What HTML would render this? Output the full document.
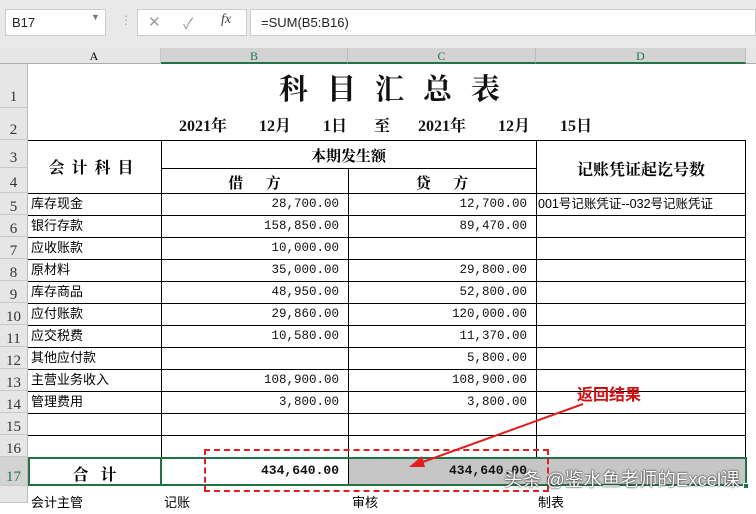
<!DOCTYPE html>
<html><head><meta charset="utf-8"><style>
*{margin:0;padding:0;box-sizing:border-box}
body{width:756px;height:503px;overflow:hidden;background:#fff;position:relative;font-family:"Liberation Sans","Noto Sans CJK SC",sans-serif}
.a{position:absolute}
.ser{font-family:"Liberation Serif","Noto Serif CJK SC",serif}
.rh{position:absolute;left:0;width:28px;background:#e6e6e6;border-bottom:1px solid #c8c8c8;color:#333;font-size:15px;text-align:center;font-family:"Liberation Serif",serif;border-right:1px solid #bbb}
.hl{position:absolute;background:#000}
.cell{position:absolute;font-size:13px;line-height:22px;white-space:nowrap}
.num{text-align:right;font-family:"Liberation Mono",monospace;font-size:12.5px;color:#111}
.d{position:absolute;top:113px;font-size:16px;font-weight:bold;color:#111;font-family:"Liberation Serif","Noto Serif CJK SC",serif;white-space:nowrap}
</style></head><body>
<div class="a" style="left:0;top:0;width:756px;height:48px;background:#e9e9e9"></div>
<div class="a" style="left:5px;top:9px;width:101px;height:27px;background:#fff;border:1px solid #ccc;font-size:13px;line-height:25px;padding-left:6px;color:#222">B17</div>
<div class="a" style="left:91px;top:12px;font-size:9px;color:#777">▼</div>
<div class="a" style="left:120px;top:13px;font-size:12px;color:#aaa">⋮</div>
<div class="a" style="left:137px;top:9px;width:110px;height:27px;background:#fff;border:1px solid #ccc"></div>
<div class="a" style="left:148px;top:13px;font-size:15px;color:#999">✕</div>
<div class="a" style="left:183px;top:13px;font-size:15px;color:#999">✓</div>
<div class="a ser" style="left:221px;top:12px;font-size:14px;font-style:italic;color:#444">fx</div>
<div class="a" style="left:250px;top:9px;width:506px;height:27px;background:#fff;border:1px solid #ccc;font-size:13px;line-height:25px;padding-left:10px;color:#222">=SUM(B5:B16)</div>
<div class="a ser" style="left:0;top:48px;width:756px;height:16px;background:#e6e6e6;border-bottom:1px solid #aaa"></div>
<div class="a ser" style="left:28px;top:48px;width:133px;height:16px;text-align:center;font-size:12px;line-height:16px;border-right:1px solid #c8c8c8">A</div>
<div class="a ser" style="left:161px;top:48px;width:187px;height:16px;background:#d3d3d3;text-align:center;font-size:12px;line-height:16px;color:#217346;border-right:1px solid #bbb;border-bottom:2px solid #217346">B</div>
<div class="a ser" style="left:348px;top:48px;width:188px;height:16px;background:#d3d3d3;text-align:center;font-size:12px;line-height:16px;color:#217346;border-right:1px solid #bbb;border-bottom:2px solid #217346">C</div>
<div class="a ser" style="left:536px;top:48px;width:210px;height:16px;background:#d3d3d3;text-align:center;font-size:12px;line-height:16px;color:#217346;border-right:1px solid #bbb;border-bottom:2px solid #217346">D</div>
<div class="rh" style="top:64px;height:44px;line-height:66px">1</div>
<div class="rh" style="top:108px;height:32px;line-height:44px">2</div>
<div class="rh" style="top:140px;height:28px;line-height:36px">3</div>
<div class="rh" style="top:168px;height:25px;line-height:30px">4</div>
<div class="rh" style="top:193px;height:22px;line-height:28px">5</div>
<div class="rh" style="top:215px;height:22px;line-height:28px">6</div>
<div class="rh" style="top:237px;height:22px;line-height:28px">7</div>
<div class="rh" style="top:259px;height:22px;line-height:28px">8</div>
<div class="rh" style="top:281px;height:22px;line-height:28px">9</div>
<div class="rh" style="top:303px;height:22px;line-height:28px">10</div>
<div class="rh" style="top:325px;height:22px;line-height:28px">11</div>
<div class="rh" style="top:347px;height:22px;line-height:28px">12</div>
<div class="rh" style="top:369px;height:22px;line-height:28px">13</div>
<div class="rh" style="top:391px;height:22px;line-height:28px">14</div>
<div class="rh" style="top:413px;height:22px;line-height:28px">15</div>
<div class="rh" style="top:435px;height:22px;line-height:28px">16</div>
<div class="rh" style="top:457px;height:29px;line-height:40px;background:#d3d3d3;color:#217346">17</div>
<div class="rh" style="top:486px;height:17px"></div>
<div class="a ser" style="left:279px;top:67px;font-size:29px;letter-spacing:19px;font-weight:bold;color:#111;white-space:nowrap">科目汇总表</div>
<div class="d" style="left:179px">2021年</div>
<div class="d" style="left:259px">12月</div>
<div class="d" style="left:323px">1日</div>
<div class="d" style="left:374px">至</div>
<div class="d" style="left:418px">2021年</div>
<div class="d" style="left:498px">12月</div>
<div class="d" style="left:560px">15日</div>
<div class="hl" style="left:28px;top:140px;width:718px;height:1px"></div>
<div class="hl" style="left:161px;top:168px;width:375px;height:1px"></div>
<div class="hl" style="left:28px;top:193px;width:718px;height:1px"></div>
<div class="hl" style="left:28px;top:215px;width:718px;height:1px"></div>
<div class="hl" style="left:28px;top:237px;width:718px;height:1px"></div>
<div class="hl" style="left:28px;top:259px;width:718px;height:1px"></div>
<div class="hl" style="left:28px;top:281px;width:718px;height:1px"></div>
<div class="hl" style="left:28px;top:303px;width:718px;height:1px"></div>
<div class="hl" style="left:28px;top:325px;width:718px;height:1px"></div>
<div class="hl" style="left:28px;top:347px;width:718px;height:1px"></div>
<div class="hl" style="left:28px;top:369px;width:718px;height:1px"></div>
<div class="hl" style="left:28px;top:391px;width:718px;height:1px"></div>
<div class="hl" style="left:28px;top:413px;width:718px;height:1px"></div>
<div class="hl" style="left:28px;top:435px;width:718px;height:1px"></div>
<div class="hl" style="left:28px;top:457px;width:718px;height:1px"></div>
<div class="hl" style="left:28px;top:485px;width:718px;height:1px"></div>
<div class="hl" style="left:161px;top:140px;width:1px;height:346px"></div>
<div class="hl" style="left:348px;top:168px;width:1px;height:318px"></div>
<div class="hl" style="left:536px;top:140px;width:1px;height:346px"></div>
<div class="hl" style="left:745px;top:140px;width:1px;height:346px"></div>
<div class="a" style="left:349px;top:458px;width:396px;height:27px;background:#c6c6c6"></div>
<div class="a ser" style="left:28px;top:155px;width:133px;text-align:center;font-size:16px;font-weight:bold;letter-spacing:7px">会计科目</div>
<div class="a ser" style="left:161px;top:145px;width:375px;text-align:center;font-size:15px;font-weight:bold">本期发生额</div>
<div class="a ser" style="left:161px;top:172px;width:187px;text-align:center;font-size:15px;font-weight:bold;white-space:pre">借      方</div>
<div class="a ser" style="left:348px;top:172px;width:188px;text-align:center;font-size:15px;font-weight:bold;white-space:pre">贷      方</div>
<div class="a ser" style="left:536px;top:157px;width:210px;text-align:center;font-size:16px;font-weight:bold">记账凭证起讫号数</div>
<div class="cell" style="left:31px;top:193px">库存现金</div>
<div class="cell" style="left:31px;top:215px">银行存款</div>
<div class="cell" style="left:31px;top:237px">应收账款</div>
<div class="cell" style="left:31px;top:259px">原材料</div>
<div class="cell" style="left:31px;top:281px">库存商品</div>
<div class="cell" style="left:31px;top:303px">应付账款</div>
<div class="cell" style="left:31px;top:325px">应交税费</div>
<div class="cell" style="left:31px;top:347px">其他应付款</div>
<div class="cell" style="left:31px;top:369px">主营业务收入</div>
<div class="cell" style="left:31px;top:391px">管理费用</div>
<div class="cell num" style="left:161px;width:178px;top:193px">28,700.00</div>
<div class="cell num" style="left:161px;width:178px;top:215px">158,850.00</div>
<div class="cell num" style="left:161px;width:178px;top:237px">10,000.00</div>
<div class="cell num" style="left:161px;width:178px;top:259px">35,000.00</div>
<div class="cell num" style="left:161px;width:178px;top:281px">48,950.00</div>
<div class="cell num" style="left:161px;width:178px;top:303px">29,860.00</div>
<div class="cell num" style="left:161px;width:178px;top:325px">10,580.00</div>
<div class="cell num" style="left:161px;width:178px;top:369px">108,900.00</div>
<div class="cell num" style="left:161px;width:178px;top:391px">3,800.00</div>
<div class="cell num" style="left:348px;width:179px;top:193px">12,700.00</div>
<div class="cell num" style="left:348px;width:179px;top:215px">89,470.00</div>
<div class="cell num" style="left:348px;width:179px;top:259px">29,800.00</div>
<div class="cell num" style="left:348px;width:179px;top:281px">52,800.00</div>
<div class="cell num" style="left:348px;width:179px;top:303px">120,000.00</div>
<div class="cell num" style="left:348px;width:179px;top:325px">11,370.00</div>
<div class="cell num" style="left:348px;width:179px;top:347px">5,800.00</div>
<div class="cell num" style="left:348px;width:179px;top:369px">108,900.00</div>
<div class="cell num" style="left:348px;width:179px;top:391px">3,800.00</div>
<div class="cell" style="left:538px;top:193px;font-size:12.5px">001号记账凭证--032号记账凭证</div>
<div class="a ser" style="left:28px;top:462px;width:133px;text-align:center;font-size:16px;font-weight:bold;white-space:pre">合   计</div>
<div class="cell num" style="left:161px;width:178px;top:460px;font-weight:bold;font-size:13px">434,640.00</div>
<div class="cell num" style="left:348px;width:179px;top:460px;font-weight:bold;font-size:13px">434,640.00</div>
<div class="a" style="left:28px;top:457px;width:134px;height:29px;border:2px solid #217346"></div>
<div class="a" style="left:160px;top:457px;width:587px;height:29px;border:2px solid #217346"></div>
<div class="a" style="left:743px;top:483px;width:6px;height:6px;background:#217346;border:1px solid #fff"></div>
<div class="cell" style="left:31px;top:492px">会计主管</div>
<div class="cell" style="left:164px;top:492px">记账</div>
<div class="cell" style="left:352px;top:492px">审核</div>
<div class="cell" style="left:538px;top:492px">制表</div>
<div class="a" style="left:204px;top:449px;width:345px;height:43px;border:2px dashed #e02020"></div>
<svg class="a" style="left:0;top:0" width="756" height="503"><line x1="583" y1="404" x2="420" y2="463" stroke="#e02020" stroke-width="2"/><polygon points="409,467 422,456 425,467" fill="#e02020"/></svg>
<div class="a" style="left:577px;top:381px;font-size:16px;font-weight:bold;color:#d01010">返回结果</div>
<div class="a" style="left:504px;top:466px;font-size:18.5px;color:#fff;text-shadow:0 0 2px #333,0 0 1px #000;white-space:nowrap">头条 @鉴水鱼老师的Excel课</div>
</body></html>
